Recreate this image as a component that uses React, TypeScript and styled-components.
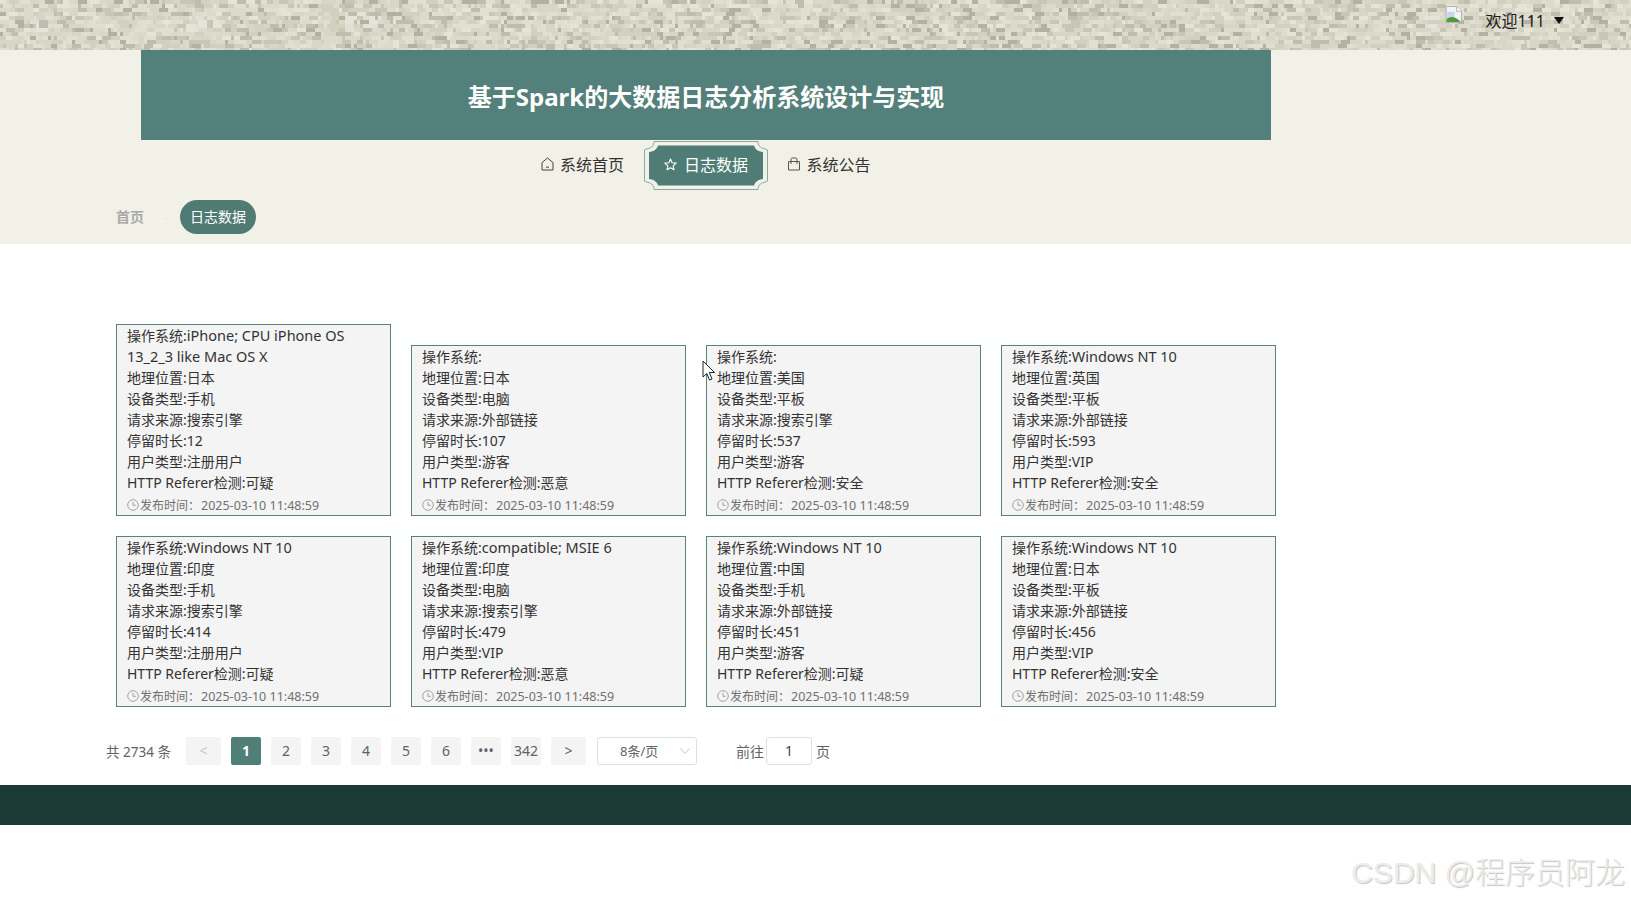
import React, { useMemo } from "react";
import styled, { createGlobalStyle } from "styled-components";

const Global = createGlobalStyle`
  html, body { margin: 0; padding: 0; background: #fff; }
  body { font-family: "Noto Sans", "Noto Sans CJK SC", "Liberation Sans", sans-serif; overflow: hidden; }
  * { box-sizing: border-box; }
`;

const Page = styled.div`
  position: relative;
  width: 1631px;
  height: 901px;
  overflow: hidden;
  background: #fff;
`;

const TopBar = styled.header`
  position: relative;
  height: 50px;
  display: flex;
  justify-content: flex-end;
  align-items: flex-start;
  padding-right: 67px;
  overflow: hidden;
  background: #d8d6c6;
`;

const Texture = styled.svg`
  position: absolute;
  inset: 0;
`;

const UserBox = styled.div`
  position: relative;
  display: flex;
  align-items: center;
  height: 39px;
  color: #1a1a1a;
  font-size: 16px;
  gap: 9px;
`;

const Avatar = styled.svg`
  position: absolute;
  left: -41px;
  top: 6px;
`;

const Caret = styled.span`
  width: 0;
  height: 0;
  margin-top: 1px;
  border-left: 5px solid transparent;
  border-right: 5px solid transparent;
  border-top: 7px solid #111;
`;

const Head = styled.div`
  background: #f2f1e8;
  height: 194px;
`;

const Banner = styled.div`
  width: 1130px;
  height: 90px;
  margin-left: 141px;
  display: flex;
  align-items: center;
  justify-content: center;
  background: #53807a;
  color: #fff;
  font-size: 24px;
  font-weight: 700;
`;

const Nav = styled.nav`
  display: flex;
  justify-content: center;
  align-items: center;
  width: 1412px;
  height: 50px;
`;

const NavItem = styled.a<{ $active?: boolean; $gap?: number }>`
  position: relative;
  display: flex;
  align-items: center;
  justify-content: center;
  gap: ${(p) => p.$gap ?? 7}px;
  width: ${(p) => (p.$active ? "124px" : "107px")};
  height: 48px;
  margin: 0 ${(p) => (p.$active ? "8px" : "0")} 2px;
  font-size: 16px;
  color: ${(p) => (p.$active ? "#fff" : "#333")};
`;

const NavFrame = styled.svg`
  position: absolute;
  left: 0;
  top: 1px;
`;

const NavLabel = styled.span`
  position: relative;
  display: flex;
  align-items: center;
  gap: 7px;
`;

const Crumbs = styled.div`
  display: flex;
  align-items: center;
  height: 54px;
  padding: 0 0 0 116px;
  font-size: 14px;
`;

const CrumbLink = styled.span`
  color: #a9a9a5;
  font-weight: 700;
  margin-top: -2px;
`;

const CrumbSep = styled.span`
  color: #fbfbf8;
  width: 36px;
  text-align: center;
`;

const CrumbChip = styled.span`
  display: flex;
  align-items: center;
  justify-content: center;
  width: 76px;
  height: 34px;
  padding-bottom: 2px;
  border-radius: 17px;
  background: #4f7b73;
  color: #fff;
`;

const Main = styled.main`
  padding: 80px 0 0 116px;
`;

const CardGrid = styled.div`
  display: grid;
  grid-template-columns: repeat(4, 275px);
  gap: 20px;
  align-items: end;
`;

const Card = styled.article`
  padding: 0 10px;
  border: 1px solid #5b8279;
  background: #f4f4f4;
  color: #333;
  font-size: 14px;
  line-height: 21px;
`;

const Line = styled.div`
  word-break: break-word;
`;

const OsValue = styled.span`
  font-size: 14.5px;
`;

const Time = styled.div`
  display: flex;
  align-items: center;
  gap: 1px;
  height: 22px;
  padding-top: 2px;
  font-size: 12px;
  color: #707070;
`;

const TimeValue = styled.span`
  font-size: 12.500px;
`;

const Pager = styled.div`
  display: flex;
  align-items: center;
  height: 30px;
  margin: 29px 0 0 -10px;
  font-size: 14px;
  color: #606266;
`;

const Total = styled.span`
  width: 65px;
  margin-right: 15px;
  padding-bottom: 1px;
  white-space: nowrap;
  font-size: 13.500px;
`;

const PageBtn = styled.span<{ $active?: boolean; $wide?: boolean; $muted?: boolean }>`
  display: flex;
  align-items: center;
  justify-content: center;
  width: ${(p) => (p.$wide ? "35px" : "30px")};
  height: 28px;
  margin-right: 10px;
  padding-bottom: 1px;
  border-radius: 2px;
  background: ${(p) => (p.$active ? "#4f7f77" : "#f4f4f5")};
  color: ${(p) => (p.$active ? "#fff" : p.$muted ? "#c0c4cc" : "#606266")};
  font-weight: ${(p) => (p.$active ? 700 : 400)};
`;

const SizeSelect = styled.span`
  position: relative;
  display: flex;
  align-items: center;
  width: 100px;
  height: 28px;
  margin: 0 39px 0 1px;
  padding: 0 0 1px 22px;
  border: 1px solid #dcdfe6;
  border-radius: 3px;
  font-size: 13px;
`;

const Chevron = styled.svg`
  position: absolute;
  right: 5px;
  top: 9px;
`;

const JumpLabel = styled.span`
  padding-bottom: 1px;
`;

const JumpInput = styled.span`
  display: flex;
  align-items: center;
  justify-content: center;
  width: 46px;
  height: 28px;
  margin: 0 4px 0 2px;
  padding-bottom: 1px;
  border: 1px solid #dcdfe6;
  border-radius: 3px;
  color: #444;
`;

const Footer = styled.footer`
  height: 40px;
  margin-top: 19px;
  background: #1c3a38;
`;

const Watermark = styled.div`
  position: absolute;
  right: 6px;
  top: 853px;
  font-family: "Liberation Sans", "Noto Sans CJK SC", sans-serif;
  font-size: 30px;
  font-weight: 300;
  line-height: 40px;
  white-space: nowrap;
  color: #ececec;
  text-shadow: 1px 1px 1px #c4c4c4;
`;

const Cursor = styled.svg`
  position: absolute;
  left: 702px;
  top: 360px;
`;

const HomeIcon = () => (
  <svg width="13" height="14" viewBox="0 0 13 14" fill="none" stroke="#444" strokeWidth="1">
    <path d="M1 5.600 6.500 1 12 5.600V13H1Z" />
    <path d="M5 10.200h3" />
  </svg>
);
const StarIcon = () => (
  <svg width="13" height="13" viewBox="0 0 13 13" fill="none" stroke="#fff" strokeWidth="1.1" strokeLinejoin="round">
    <path d="M6.500 1 8.100 4.700 12.200 5.100 9.100 7.800 10 11.800 6.500 9.700 3 11.800 3.900 7.800.8 5.100 4.900 4.700Z" />
  </svg>
);
const BagIcon = () => (
  <svg width="12" height="14" viewBox="0 0 12 14" fill="none" stroke="#555" strokeWidth="1">
    <path d="M.5 4.500h11v8.500H.5Z" />
    <path d="M3 7V2.200C3 1.400 3.600 1 4.200 1h3.600C8.400 1 9 1.400 9 2.200V7" />
  </svg>
);
const ClockIcon = () => (
  <svg width="12" height="12" viewBox="0 0 12 12" fill="none" stroke="#999" strokeWidth="0.9">
    <circle cx="6" cy="6" r="5.300" />
    <path d="M6 2.800V6.300H8.800" />
  </svg>
);

const Texturer = () => {
  const rects = useMemo(() => {
    const colors = [
      "#dcdacb", "#dcdacb", "#d8d6c6", "#d8d6c6", "#e1dfd1", "#e1dfd1",
      "#d2d0bf", "#d2d0bf", "#e6e4d8", "#c8c6b5", "#bfbdad", "#b3b1a2",
    ];
    let s = 98761;
    const next = () => {
      s = (s * 1103515245 + 12345) & 0x7fffffff;
      return ((s >> 8) & 0xffff) / 0x10000;
    };
    const out: { x: number; y: number; w: number; h: number; c: string }[] = [];
    for (let y = 0; y < 50; y += 4) {
      let x = 0;
      while (x < 1631) {
        const w = 3 + Math.floor(next() * 3) * 3;
        const h = next() < 0.25 ? 8 : 4;
        out.push({ x, y, w, h, c: colors[Math.floor(next() * colors.length)] });
        x += w;
      }
    }
    return out;
  }, []);
  return (
    <Texture width="1631" height="50" shapeRendering="crispEdges">
      {rects.map((r, i) => (
        <rect key={i} x={r.x} y={r.y} width={r.w} height={r.h} fill={r.c} />
      ))}
    </Texture>
  );
};

type Log = { os: string; geo: string; dev: string; src: string; stay: number; user: string; ref: string };
const logs: Log[] = [
  { os: "iPhone; CPU iPhone OS 13_2_3 like Mac OS X", geo: "日本", dev: "手机", src: "搜索引擎", stay: 12, user: "注册用户", ref: "可疑" },
  { os: "", geo: "日本", dev: "电脑", src: "外部链接", stay: 107, user: "游客", ref: "恶意" },
  { os: "", geo: "美国", dev: "平板", src: "搜索引擎", stay: 537, user: "游客", ref: "安全" },
  { os: "Windows NT 10", geo: "英国", dev: "平板", src: "外部链接", stay: 593, user: "VIP", ref: "安全" },
  { os: "Windows NT 10", geo: "印度", dev: "手机", src: "搜索引擎", stay: 414, user: "注册用户", ref: "可疑" },
  { os: "compatible; MSIE 6", geo: "印度", dev: "电脑", src: "搜索引擎", stay: 479, user: "VIP", ref: "恶意" },
  { os: "Windows NT 10", geo: "中国", dev: "手机", src: "外部链接", stay: 451, user: "游客", ref: "可疑" },
  { os: "Windows NT 10", geo: "日本", dev: "平板", src: "外部链接", stay: 456, user: "VIP", ref: "安全" },
];

export default function App() {
  return (
    <Page>
      <Global />
      <TopBar>
        <Texturer />
        <UserBox>
          <Avatar width="17" height="17" viewBox="0 0 16 16">
            <path d="M1 .5h10L15.500 5v10.500H1Z" fill="#f3f3f3" stroke="#b5b5b5" />
            <path d="M11 .5V5h4.500" fill="#fff" stroke="#b5b5b5" />
            <path d="M2 5.500h7v6H2Z" fill="#c5d6f0" />
            <path d="M1.500 15v-2.500C4 9.500 9 9 14.500 14.500V15Z" fill="#4f9a3a" />
          </Avatar>
          欢迎111
          <Caret />
        </UserBox>
      </TopBar>
      <Head>
        <Banner>基于Spark的大数据日志分析系统设计与实现</Banner>
        <Nav>
          <NavItem $gap={6}>
            <HomeIcon />
            系统首页
          </NavItem>
          <NavItem $active>
            <NavFrame width="124" height="49" viewBox="0 0 124 49" fill="none">
              <path
                d="M10 .5H114C114 4 116 7 120 7.500L123.500 9V40L120 41.500C116 42 114 45 114 48.500H10C10 45 8 42 4 41.500L.5 40V9L4 7.500C8 7 10 4 10 .5Z"
                stroke="#8aa8a0"
              />
              <path
                d="M14 4.500H110C111 8 114 10.500 119 11V38C114 38.500 111 41 110 44.500H14C13 41 10 38.500 5 38V11C10 10.500 13 8 14 4.500Z"
                fill="#4f7d76"
              />
            </NavFrame>
            <NavLabel>
              <StarIcon />
              日志数据
            </NavLabel>
          </NavItem>
          <NavItem $gap={6}>
            <BagIcon />
            系统公告
          </NavItem>
        </Nav>
        <Crumbs>
          <CrumbLink>首页</CrumbLink>
          <CrumbSep>:</CrumbSep>
          <CrumbChip>日志数据</CrumbChip>
        </Crumbs>
      </Head>
      <Main>
        <CardGrid>
          {logs.map((l, i) => (
            <Card key={i}>
              <Line>
                操作系统:<OsValue>{l.os}</OsValue>
              </Line>
              <Line>地理位置:{l.geo}</Line>
              <Line>设备类型:{l.dev}</Line>
              <Line>请求来源:{l.src}</Line>
              <Line>停留时长:{l.stay}</Line>
              <Line>用户类型:{l.user}</Line>
              <Line>HTTP Referer检测:{l.ref}</Line>
              <Time>
                <ClockIcon />
                发布时间：<TimeValue>2025-03-10 11:48:59</TimeValue>
              </Time>
            </Card>
          ))}
        </CardGrid>
        <Pager>
          <Total>共 2734 条</Total>
          <PageBtn $wide $muted>&lt;</PageBtn>
          <PageBtn $active>1</PageBtn>
          <PageBtn>2</PageBtn>
          <PageBtn>3</PageBtn>
          <PageBtn>4</PageBtn>
          <PageBtn>5</PageBtn>
          <PageBtn>6</PageBtn>
          <PageBtn>•••</PageBtn>
          <PageBtn>342</PageBtn>
          <PageBtn $wide>&gt;</PageBtn>
          <SizeSelect>
            8条/页
            <Chevron width="12" height="8" viewBox="0 0 12 8" fill="none" stroke="#c0c4cc">
              <path d="M1.500 1.500 6 6.500 10.500 1.500" />
            </Chevron>
          </SizeSelect>
          <JumpLabel>前往</JumpLabel>
          <JumpInput>1</JumpInput>
          <JumpLabel>页</JumpLabel>
        </Pager>
      </Main>
      <Footer />
      <Watermark>CSDN @程序员阿龙</Watermark>
      <Cursor width="14" height="22" viewBox="0 0 14 22">
        <path d="M1 1V17L4.800 13.500 7.500 20 10 19 7.300 12.500H12.500Z" fill="#fff" stroke="#222" />
      </Cursor>
    </Page>
  );
}
